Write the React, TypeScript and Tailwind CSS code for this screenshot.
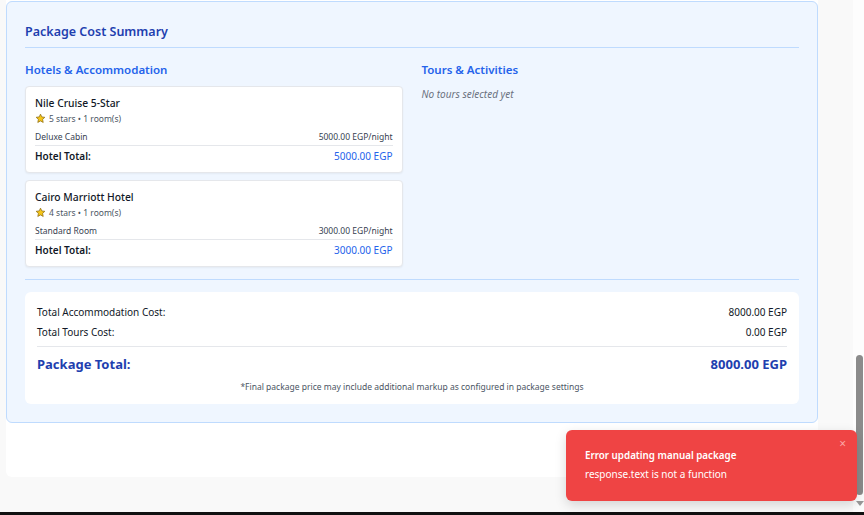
import React from "react";

interface HotelLine {
  name: string;
  stars: number;
  rooms: number;
  roomType: string;
  rate: string;
  total: string;
}

const hotels: HotelLine[] = [
  { name: "Nile Cruise 5-Star", stars: 5, rooms: 1, roomType: "Deluxe Cabin", rate: "5000.00 EGP/night", total: "5000.00 EGP" },
  { name: "Cairo Marriott Hotel", stars: 4, rooms: 1, roomType: "Standard Room", rate: "3000.00 EGP/night", total: "3000.00 EGP" },
];

const StarIcon = () => (
  <svg width="11" height="11" viewBox="0 0 24 24" className="shrink-0">
    <path
      d="M12 2.5l2.9 6.1 6.6.8-4.9 4.6 1.3 6.6L12 17.3l-5.9 3.3 1.3-6.6-4.9-4.6 6.6-.8z"
      fill="#f5c518"
      stroke="#8a6a10"
      strokeWidth="1.6"
      strokeLinejoin="round"
    />
  </svg>
);

const HotelCard = ({ hotel }: { hotel: HotelLine }) => (
  <div className="bg-white border border-[#e5e7eb] rounded-[4px] shadow-[0_1px_2px_rgba(0,0,0,0.05)] px-[9px] pt-[9px] pb-[9px]">
    <div className="text-[10.3px] font-medium text-[#111827] leading-[15px]">{hotel.name}</div>
    <div className="flex items-center gap-[3px] text-[8.5px] text-[#4b5563] leading-[13px] mt-[1px]">
      <StarIcon />
      <span>{hotel.stars} stars • {hotel.rooms} room(s)</span>
    </div>
    <div className="flex justify-between text-[8.5px] text-[#374151] leading-[12px] mt-[6px] pb-[2px] border-b border-[#e5e7eb]">
      <span>{hotel.roomType}</span>
      <span>{hotel.rate}</span>
    </div>
    <div className="flex justify-between text-[10px] leading-[14px] mt-[3px]">
      <span className="font-semibold text-[#111827]">Hotel Total:</span>
      <span className="text-[#2563eb]">{hotel.total}</span>
    </div>
  </div>
);

export default function App() {
  return (
    <div className="relative h-[515px] w-[864px] overflow-hidden bg-[#f9f9f9] font-['Noto_Sans',sans-serif]">
      <div className="flex h-[512px]">
        {/* page content */}
        <div className="w-[853px] pl-[6px] pr-[35px]">
          <div className="bg-white rounded-b-[6px] pt-[1px] pb-[54px]">
            <div className="bg-[#eff6ff] border border-[#bfdbfe] rounded-[6px] px-[18px] pt-[20px] pb-[18px]">
              <h2 className="text-[12.5px] font-semibold text-[#1e40af] leading-[20px] pb-[5px] border-b border-[#bfdbfe]">
                Package Cost Summary
              </h2>

              <div className="grid grid-cols-2 gap-[19px] mt-[13px]">
                <div>
                  <h3 className="text-[11.5px] font-semibold text-[#2563eb] leading-[18px] mb-[7px]">
                    Hotels &amp; Accommodation
                  </h3>
                  <div className="flex flex-col gap-[7px]">
                    {hotels.map((h) => (
                      <HotelCard key={h.name} hotel={h} />
                    ))}
                  </div>
                </div>
                <div>
                  <h3 className="text-[11.5px] font-semibold text-[#2563eb] leading-[18px] mb-[9px]">
                    Tours &amp; Activities
                  </h3>
                  <p className="text-[10px] italic text-[#6b7280] leading-[12px]">No tours selected yet</p>
                </div>
              </div>

              <div className="border-t border-[#bfdbfe] mt-[12px] pt-[12px]">
                <div className="bg-white rounded-[6px] px-[12px] pt-[13px] pb-[11px]">
                  <div className="flex justify-between text-[10px] text-[#111827] leading-[14px]">
                    <span>Total Accommodation Cost:</span>
                    <span>8000.00 EGP</span>
                  </div>
                  <div className="flex justify-between text-[10px] text-[#111827] leading-[14px] mt-[6px]">
                    <span>Total Tours Cost:</span>
                    <span>0.00 EGP</span>
                  </div>
                  <div className="flex justify-between text-[13px] font-bold text-[#1e40af] leading-[18px] border-t border-[#e5e7eb] mt-[7px] pt-[8px]">
                    <span>Package Total:</span>
                    <span>8000.00 EGP</span>
                  </div>
                  <p className="text-center text-[8.5px] text-[#4b5563] leading-[12px] mt-[8px]">
                    *Final package price may include additional markup as configured in package settings
                  </p>
                </div>
              </div>
            </div>
          </div>
        </div>

        {/* scrollbar */}
        <div className="relative w-[11px] bg-[#fdfdfd]">
          <div className="absolute left-[3px] right-[1px] top-[355px] h-[140px] rounded-full bg-[#8b8b8b]" />
          <div className="absolute left-[3px] top-[501px] w-0 h-0 border-l-[4px] border-r-[4px] border-t-[5px] border-l-transparent border-r-transparent border-t-[#9a9a9a]" />
        </div>
      </div>
      <div className="h-[3px] bg-[#111111]" />

      {/* toast */}
      <div className="absolute left-[566px] top-[430px] w-[291px] h-[71px] bg-[#ef4444] rounded-[6px] shadow-[0_4px_12px_rgba(0,0,0,0.15)] pl-[19px] pt-[19px] text-white">
        <div className="text-[9.8px] font-semibold leading-[14px]">Error updating manual package</div>
        <div className="text-[10px] leading-[14px] mt-[4px]">response.text is not a function</div>
        <span className="absolute right-[11px] top-[8px] text-[12px] leading-[12px] text-[#fca5a5]">×</span>
      </div>
    </div>
  );
}
